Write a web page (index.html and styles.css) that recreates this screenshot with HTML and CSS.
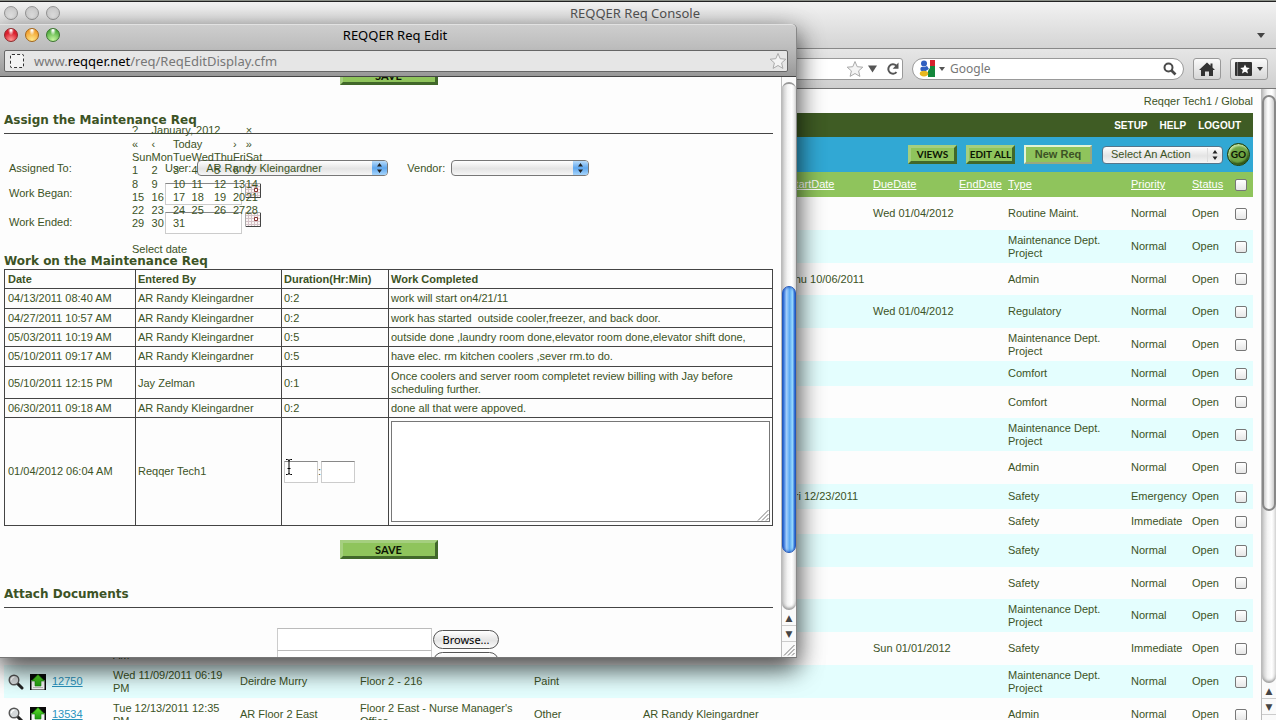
FILE: index.html
```html
<!DOCTYPE html>
<html lang="en">
<head>
<meta charset="utf-8">
<title>REQQER Req Console</title>
<link rel="stylesheet" href="styles.css">
</head>
<body>
<svg class="defs" aria-hidden="true">
  <defs>
    <linearGradient id="leaf" x1="0" y1="0" x2="0" y2="1"><stop offset="0" stop-color="#5fe02a"/><stop offset="1" stop-color="#1f9a10"/></linearGradient>
    <symbol id="lens" viewBox="0 0 16 16"><path d="M9.5 9.5 14 14" stroke="#222" stroke-width="3" stroke-linecap="round"/><circle cx="6" cy="6" r="4.8" fill="#d4d8da" stroke="#555" stroke-width="1.4"/><path d="M3.4 6.2A2.8 2.8 0 0 1 6.4 3.2" fill="none" stroke="#fff" stroke-width="1.2"/></symbol>
    <symbol id="upload" viewBox="0 0 16 16"><path d="M0 0h16v16H0z" fill="#0a0a0a"/><path d="M1.500 6h13v9.500h-13z" fill="#f4f4f4"/><path d="M3 13.500h10" stroke="#bbb"/><path d="M8 .5 14.500 7H11v5H5V7H1.500z" fill="url(#leaf)" stroke="#158009" stroke-width=".6"/></symbol>
    <symbol id="star" viewBox="0 0 18 18"><path d="M9 1.500 11.200 6.700 16.800 7.200 12.600 10.900 13.900 16.400 9 13.500 4.100 16.400 5.400 10.900 1.200 7.200 6.800 6.700z" stroke-linejoin="round"/></symbol>
    <symbol id="updown" viewBox="0 0 8 12"><path d="M4 1 6.500 4.500h-5zM4 11 1.500 7.500h5z"/></symbol>
    <symbol id="cal" viewBox="0 0 16 15"><path d="M.5.500h15v14H.500z" fill="#fbf4f4" stroke="#aaa"/><path d="M3.500 1v13M6.500 1v13M9.500 1v13M12.500 1v13M1 3.500h14M1 6.500h14M1 9.500h14M1 12.500h14" stroke="#d5c3c8"/><path d="M15.500 1v13.500H1" fill="none" stroke="#444"/><path d="M9.500 5.500h3v3h-3z" fill="#fff" stroke="#833"/></symbol>
    <symbol id="grip" viewBox="0 0 12 12"><path d="M1 11.500 11.500 1M5 11.500 11.500 5M9 11.500 11.500 9" stroke="#777" fill="none"/></symbol>
  </defs>
</svg>

<div class="console">
  <header class="titlebar">
    <div class="lights off"><i></i><i></i><i></i></div>
    <h1>REQQER Req Console</h1>
    <svg class="tabs-menu" viewBox="0 0 8 5"><path d="M0 0h8L4 5z"/></svg>
  </header>
  <div class="toolbar">
    <div class="location">
      <svg class="fav" width="18" height="18"><use href="#star"/></svg>
      <svg width="9" height="8" viewBox="0 0 9 8"><path d="M0 .5h9L4.500 7.500z" fill="#555"/></svg>
      <svg class="reload" width="14" height="14" viewBox="0 0 14 14"><path d="M10.500 10.200A4.700 4.700 0 1 1 10.200 3.600" fill="none" stroke="#555" stroke-width="2"/><path d="M12.500.500v6.200H6.700z" fill="#555"/></svg>
    </div>
    <div class="search">
      <svg width="17" height="17" viewBox="0 0 17 17"><path d="M9 0h7v6h-5z" fill="#d5232e"/><path d="M9 6h7v11H9z" fill="#14873b"/><path d="M9 0h2v8l-2 3z" fill="#fff"/><circle cx="5" cy="3.500" r="3" fill="#2f5fc0"/><circle cx="3.500" cy="9" r="2.200" fill="#2f5fc0"/><path d="M3 8 8 6l2 3-5 3z" fill="#2f5fc0"/><ellipse cx="5" cy="13.600" rx="4.200" ry="2.800" fill="#e8b81f"/></svg>
      <svg width="6" height="4" viewBox="0 0 6 4"><path d="M0 0h6L3 4z" fill="#555"/></svg>
      <input type="text" placeholder="Google" aria-label="Search with Google">
      <svg width="14" height="14" viewBox="0 0 14 14"><circle cx="5.500" cy="5.500" r="4" fill="none" stroke="#4a4a4a" stroke-width="2"/><path d="m8.500 8.500 4 4" stroke="#4a4a4a" stroke-width="2.600"/></svg>
    </div>
    <button class="tool" aria-label="Home"><svg width="16" height="14" viewBox="0 0 16 14"><path d="M8 .5 11.500 3.700V1.500h2v4L16 8h-2v6h-4V9.500H6V14H2V8H0z" fill="#333"/></svg></button>
    <button class="tool wide" aria-label="Bookmarks"><svg width="17" height="14" viewBox="0 0 17 14"><rect width="17" height="14" rx="1" fill="#333"/><path d="M2.500 0v14" stroke="#777"/><path d="m10 2.500 1.400 3.100 3.400.3-2.600 2.200.8 3.400-3-1.800-3 1.800.8-3.400-2.600-2.200 3.400-.3z" fill="#fff"/></svg><svg width="6" height="4" viewBox="0 0 6 4"><path d="M0 0h6L3 4z" fill="#333"/></svg></button>
  </div>

  <div class="viewport">
    <main class="page">
      <p class="account">Reqqer Tech1 / Global</p>
      <nav class="menu"><a href="#">SETUP</a><a href="#">HELP</a><a href="#">LOGOUT</a></nav>
      <div class="actions">
        <button class="bevel small">VIEWS</button>
        <button class="bevel small">EDIT ALL</button>
        <button class="newreq">New Req</button>
        <span class="pick action"><select aria-label="Action"><option>Select An Action</option></select><svg class="ud"><use href="#updown"/></svg></span>
        <button class="go">GO</button>
      </div>
      <table class="reqs">
        <colgroup><col class="w48"><col class="w61"><col class="w127"><col class="w120"><col class="w174"><col class="w109"><col class="w145"><col class="w85"><col class="w86"><col class="w49"><col class="w123"><col class="w61"><col class="w40"><col></colgroup>
        <thead><tr><th></th><th></th><th></th><th></th><th></th><th></th><th></th><th><a href="#">StartDate</a></th><th><a href="#">DueDate</a></th><th><a href="#">EndDate</a></th><th><a href="#">Type</a></th><th><a href="#">Priority</a></th><th><a href="#">Status</a></th><th><input type="checkbox" aria-label="Select all"></th></tr></thead>
        <tbody>
          <tr><td colspan="7"></td><td></td><td>Wed 01/04/2012</td><td></td><td>Routine Maint.</td><td>Normal</td><td>Open</td><td><input type="checkbox" aria-label="Select req"></td></tr>
          <tr><td colspan="7"></td><td></td><td></td><td></td><td>Maintenance Dept. Project</td><td>Normal</td><td>Open</td><td><input type="checkbox" aria-label="Select req"></td></tr>
          <tr class="mid"><td colspan="7"></td><td>Thu 10/06/2011</td><td></td><td></td><td>Admin</td><td>Normal</td><td>Open</td><td><input type="checkbox" aria-label="Select req"></td></tr>
          <tr><td colspan="7"></td><td></td><td>Wed 01/04/2012</td><td></td><td>Regulatory</td><td>Normal</td><td>Open</td><td><input type="checkbox" aria-label="Select req"></td></tr>
          <tr><td colspan="7"></td><td></td><td></td><td></td><td>Maintenance Dept. Project</td><td>Normal</td><td>Open</td><td><input type="checkbox" aria-label="Select req"></td></tr>
          <tr class="short"><td colspan="7"></td><td></td><td></td><td></td><td>Comfort</td><td>Normal</td><td>Open</td><td><input type="checkbox" aria-label="Select req"></td></tr>
          <tr class="mid"><td colspan="7"></td><td></td><td></td><td></td><td>Comfort</td><td>Normal</td><td>Open</td><td><input type="checkbox" aria-label="Select req"></td></tr>
          <tr><td colspan="7"></td><td></td><td></td><td></td><td>Maintenance Dept. Project</td><td>Normal</td><td>Open</td><td><input type="checkbox" aria-label="Select req"></td></tr>
          <tr><td colspan="7"></td><td></td><td></td><td></td><td>Admin</td><td>Normal</td><td>Open</td><td><input type="checkbox" aria-label="Select req"></td></tr>
          <tr class="short"><td colspan="7"></td><td>Fri 12/23/2011</td><td></td><td></td><td>Safety</td><td>Emergency</td><td>Open</td><td><input type="checkbox" aria-label="Select req"></td></tr>
          <tr class="short"><td colspan="7"></td><td></td><td></td><td></td><td>Safety</td><td>Immediate</td><td>Open</td><td><input type="checkbox" aria-label="Select req"></td></tr>
          <tr><td colspan="7"></td><td></td><td></td><td></td><td>Safety</td><td>Normal</td><td>Open</td><td><input type="checkbox" aria-label="Select req"></td></tr>
          <tr class="mid"><td colspan="7"></td><td></td><td></td><td></td><td>Safety</td><td>Normal</td><td>Open</td><td><input type="checkbox" aria-label="Select req"></td></tr>
          <tr><td colspan="7"></td><td></td><td></td><td></td><td>Maintenance Dept. Project</td><td>Normal</td><td>Open</td><td><input type="checkbox" aria-label="Select req"></td></tr>
          <tr><td></td><td></td><td><br>AM</td><td></td><td></td><td></td><td></td><td></td><td>Sun 01/01/2012</td><td></td><td>Safety</td><td>Immediate</td><td>Open</td><td><input type="checkbox" aria-label="Select req"></td></tr>
          <tr><td><span class="icons"><svg><use href="#lens"/></svg><svg><use href="#upload"/></svg></span></td><td><a href="#">12750</a></td><td>Wed 11/09/2011 06:19 PM</td><td>Deirdre Murry</td><td>Floor 2 - 216</td><td>Paint</td><td></td><td></td><td></td><td></td><td>Maintenance Dept. Project</td><td>Normal</td><td>Open</td><td><input type="checkbox" aria-label="Select 12750"></td></tr>
          <tr><td><span class="icons"><svg><use href="#lens"/></svg><svg><use href="#upload"/></svg></span></td><td><a href="#">13534</a></td><td>Tue 12/13/2011 12:35 PM</td><td>AR Floor 2 East</td><td>Floor 2 East - Nurse Manager's Office</td><td>Other</td><td>AR Randy Kleingardner</td><td></td><td></td><td></td><td>Admin</td><td>Normal</td><td>Open</td><td><input type="checkbox" aria-label="Select 13534"></td></tr>
        </tbody>
      </table>
    </main>
    <div class="scroll grey"><div class="track"><div class="thumb"></div></div><span class="step">▲</span><span class="step">▼</span><span class="corner"></span></div>
  </div>
</div>

<section class="popup">
  <header class="titlebar">
    <div class="lights"><i></i><i></i><i></i></div>
    <h1>REQQER Req Edit</h1>
  </header>
  <div class="urlbar"><div class="url"><span class="site"></span><span class="addr">www.<b>reqqer.net</b>/req/ReqEditDisplay.cfm</span><svg class="fav" width="18" height="18"><use href="#star"/></svg></div></div>
  <div class="viewport">
    <form class="edit">
      <button type="button" class="bevel save first">SAVE</button>
      <h2>Assign the Maintenance Req</h2>
      <div class="fields">
        <div class="row"><span class="name">Assigned To:</span>
          <label for="user">User:</label><span class="pick blue user"><select id="user"><option>AR Randy Kleingardner</option></select><svg class="ud"><use href="#updown"/></svg></span>
          <label for="vendor" class="vendor-label">Vendor:</label><span class="pick blue vendor"><select id="vendor"><option></option></select><svg class="ud"><use href="#updown"/></svg></span></div>
        <div class="row date"><label class="name" for="began">Work Began:</label><input id="began" type="text"><svg width="16" height="15"><use href="#cal"/></svg></div>
        <div class="row date"><label class="name" for="ended">Work Ended:</label><input id="ended" type="text"><svg width="16" height="15"><use href="#cal"/></svg></div>
        <table class="calendar">
          <thead>
            <tr><td>?</td><td colspan="5">January, 2012</td><td>×</td></tr>
            <tr><td>«</td><td>‹</td><td colspan="3">Today</td><td>›</td><td>»</td></tr>
            <tr><td>Sun</td><td>Mon</td><td>Tue</td><td>Wed</td><td>Thu</td><td>Fri</td><td>Sat</td></tr>
          </thead>
          <tbody>
            <tr><td>1</td><td>2</td><td>3</td><td>4</td><td>5</td><td>6</td><td>7</td></tr>
            <tr><td>8</td><td>9</td><td>10</td><td>11</td><td>12</td><td>13</td><td>14</td></tr>
            <tr><td>15</td><td>16</td><td>17</td><td>18</td><td>19</td><td>20</td><td>21</td></tr>
            <tr><td>22</td><td>23</td><td>24</td><td>25</td><td>26</td><td>27</td><td>28</td></tr>
            <tr><td>29</td><td>30</td><td>31</td><td></td><td></td><td></td><td></td></tr>
          </tbody>
          <tfoot><tr><td colspan="7">Select date</td></tr></tfoot>
        </table>
      </div>
      <h2 class="tight">Work on the Maintenance Req</h2>
      <table class="work">
        <colgroup><col class="w131"><col class="w146"><col class="w107"><col></colgroup>
        <thead><tr><th>Date</th><th>Entered By</th><th>Duration(Hr:Min)</th><th>Work Completed</th></tr></thead>
        <tbody>
          <tr><td>04/13/2011 08:40 AM</td><td>AR Randy Kleingardner</td><td>0:2</td><td>work will start on4/21/11</td></tr>
          <tr><td>04/27/2011 10:57 AM</td><td>AR Randy Kleingardner</td><td>0:2</td><td>work has started&nbsp; outside cooler,freezer, and back door.</td></tr>
          <tr><td>05/03/2011 10:19 AM</td><td>AR Randy Kleingardner</td><td>0:5</td><td>outside done ,laundry room done,elevator room done,elevator shift done,</td></tr>
          <tr><td>05/10/2011 09:17 AM</td><td>AR Randy Kleingardner</td><td>0:5</td><td>have elec. rm kitchen coolers ,sever rm.to do.</td></tr>
          <tr><td>05/10/2011 12:15 PM</td><td>Jay Zelman</td><td>0:1</td><td>Once coolers and server room completet review billing with Jay before scheduling further.</td></tr>
          <tr><td>06/30/2011 09:18 AM</td><td>AR Randy Kleingardner</td><td>0:2</td><td>done all that were appoved.</td></tr>
          <tr class="entry"><td>01/04/2012 06:04 AM</td><td>Reqqer Tech1</td><td><span class="duration"><input type="text" aria-label="Hours">:<input type="text" aria-label="Minutes"><svg class="ibeam" width="8" height="16" viewBox="0 0 8 16"><path d="M1 .5h1.500Q4 .5 4 2Q4 .5 5.500.500H7M4 2v12M1 15.500h1.500Q4 15.500 4 14Q4 15.500 5.500 15.500H7M2.500 9.500h3" fill="none" stroke="#000"/></svg></span></td><td><span class="note"><textarea aria-label="Work completed"></textarea><svg class="grip"><use href="#grip"/></svg></span></td></tr>
        </tbody>
      </table>
      <button type="button" class="bevel save">SAVE</button>
      <h2>Attach Documents</h2>
      <div class="files">
        <div><input type="text" aria-label="Document 1"><button type="button">Browse...</button></div>
        <div><input type="text" aria-label="Document 2"><button type="button">Browse...</button></div>
      </div>
    </form>
    <div class="scroll aqua"><div class="track"><div class="thumb"></div></div><span class="step">▲</span><span class="step">▼</span><span class="corner"><svg class="grip"><use href="#grip"/></svg></span></div>
  </div>
</section>
</body>
</html>
```

FILE: styles.css
```css
* { box-sizing: border-box; }
html, body { height: 100%; }
body {
  margin: 0;
  overflow: hidden;
  background: #8b8f88;
  color: #3c5325;
  font: 11px/13px "Liberation Sans", Arial, sans-serif;
}
.defs { position: absolute; width: 0; height: 0; }
svg { display: block; flex: none; }
button, input, select, textarea { font: inherit; color: inherit; margin: 0; border-radius: 0; }
h1, h2, p { margin: 0; }
table { border-spacing: 0; }
td, th { padding: 0; text-align: left; }

/* window chrome */
.console {
  display: flex;
  flex-direction: column;
  height: 100%;
  padding-top: 1px;
}
.console > .titlebar {
  position: relative;
  height: 48px;
  border-top: 1px solid #222;
  border-bottom: 1px solid #888;
  background: linear-gradient(#f2f2f2, #d4d4d4);
}
.titlebar h1 {
  text-align: center;
  color: #555;
  font: 13px/22px "Noto Sans", sans-serif;
}
.console .titlebar h1, .popup .titlebar h1 { padding-right: 6px; }
.lights { position: absolute; left: 4px; top: 4px; display: flex; gap: 7px; }
.lights i {
  width: 14px;
  height: 14px;
  border-radius: 50%;
  border: 1px solid #8d2a2c;
  background: radial-gradient(ellipse at 50% 8%, #fff 0 6%, transparent 35%), radial-gradient(circle at 50% 90%, #ff9a96, #d9202e 60%);
}
.lights i:nth-child(2) { border-color: #a3661b; background: radial-gradient(ellipse at 50% 8%, #fff 0 6%, transparent 35%), radial-gradient(circle at 50% 90%, #ffe88a, #f09a28 80%); }
.lights i:nth-child(3) { border-color: #3c7430; background: radial-gradient(ellipse at 50% 8%, #fff 0 6%, transparent 35%), radial-gradient(circle at 50% 90%, #c7f7a0, #4aa83a 80%); }
.lights.off i { border-color: #999; background: radial-gradient(circle at 50% 80%, #eee, #ccc 80%); }
.popup .lights { top: 3px; }
.tabs-menu { position: absolute; right: 11px; bottom: 10px; width: 8px; height: 5px; fill: #444; }
.toolbar {
  display: flex;
  flex: none;
  align-items: center;
  gap: 9px;
  height: 40px;
  padding-right: 8px;
  border-bottom: 1px solid #777;
  background: linear-gradient(#e6e6e6, #cfcfcf);
}
.location {
  display: flex;
  flex: 1;
  align-items: center;
  justify-content: flex-end;
  gap: 4px;
  height: 22px;
  padding-right: 2px;
  border: 1px solid #999;
  border-radius: 3px;
  background: #fff;
}
.location .reload { margin-left: 5px; }
.fav { fill: #f4f4f4; stroke: #aaa; }
.search {
  display: flex;
  align-items: center;
  gap: 3px;
  width: 272px;
  height: 22px;
  padding: 0 6px;
  border: 1px solid #999;
  border-radius: 11px;
  background: #fff;
}
.search input {
  flex: 1;
  min-width: 0;
  padding: 0 2px;
  border: 0;
  outline: 0;
  background: none;
  font: 12px/18px "Noto Sans", sans-serif;
}
.search input::placeholder { color: #777; opacity: 1; }
.tool {
  display: flex;
  align-items: center;
  justify-content: center;
  gap: 5px;
  width: 28px;
  height: 22px;
  padding: 0;
  border: 1px solid #999;
  border-radius: 3px;
  background: linear-gradient(#fafafa, #d6d6d6);
}
.tool.wide { width: 38px; }
.viewport { display: flex; flex: 1; min-height: 0; overflow: hidden; background: #fdfdfd; }

/* console page */
.page { flex: 1; min-width: 0; padding: 0 8px 0 4px; }
.account { padding: 6px 0 5px; text-align: right; }
.menu {
  display: flex;
  justify-content: flex-end;
  gap: 12px;
  padding: 6px 12px 5px;
  background: #3f5c24;
}
.menu a { color: #fff; font-size: 10px; font-weight: bold; text-decoration: none; }
.actions {
  display: flex;
  justify-content: flex-end;
  align-items: center;
  height: 35px;
  padding-right: 3px;
  background: #31a8d4;
}
.bevel {
  border: 3px solid;
  border-color: #a5cf7f #41682a #41682a #a5cf7f;
  background: #8fc45c;
  padding: 0;
  color: #0c1503;
  font: bold 11px/13px Lato, sans-serif;
}
.bevel.small { width: 49px; height: 19px; margin-right: 9px; font-size: 10px; white-space: nowrap; }
.newreq {
  width: 68px;
  height: 19px;
  margin-right: 10px;
  padding: 0;
  border: 2px solid;
  border-color: #e4f3d6 #98a880 #98a880 #e4f3d6;
  background: #8fc45c;
  font-weight: bold;
}
.pick {
  display: flex;
  align-items: center;
  height: 16px;
  overflow: hidden;
  border: 1px solid #777;
  border-radius: 4px;
  background: linear-gradient(#fff, #e4e4e4 55%, #f6f6f6);
}
.pick select {
  flex: 1;
  min-width: 0;
  height: 100%;
  padding: 0 0 0 8px;
  border: 0;
  outline: 0;
  appearance: none;
  background: none;
}
.ud { width: 15px; height: 14px; padding: 1px 3px; fill: #222; }
.pick.action { width: 121px; height: 18px; margin-right: 4px; border-color: #56758a; }
.pick.action .ud { border-left: 1px solid #ddd; }
.pick.blue .ud { background: linear-gradient(#b9dcfa, #5fa7ee 50%, #a5d4fb); }
.go {
  width: 23px;
  height: 23px;
  padding: 0;
  border: 1px solid #1c3a0c;
  border-radius: 50%;
  background: #6fa544;
  box-shadow: inset 1px 2px 2px #c3e3a4, inset -1px -2px 2px #2c5216;
  color: #0c1503;
  font: bold 10px/19px Lato, sans-serif;
}
.reqs { width: 100%; table-layout: fixed; }
.reqs th { height: 25px; background: #8fc45c; font-weight: normal; white-space: nowrap; }
.reqs th a { color: #fff; }
.reqs td { height: 33px; padding-right: 4px; }
.reqs td:nth-child(n+2):nth-last-child(n+6) { padding-right: 6px; }
.reqs td:nth-last-child(-n+7):nth-last-child(n+6) { white-space: nowrap; }
.reqs .mid td { height: 32px; }
.reqs .short td { height: 25px; }
.reqs tbody tr:nth-child(even) { background: #e4fefe; }
.reqs td a { color: #2b94bd; }
.reqs input {
  display: block;
  width: 12px;
  height: 12px;
  margin-left: 3px;
  appearance: none;
  border: 1px solid #777;
  border-radius: 2px;
  background: linear-gradient(#fff, #e6e6e6);
}
.icons { display: flex; gap: 6px; padding-left: 4px; }
.icons svg { width: 16px; height: 16px; }
.w40 { width: 40px; }
.w48 { width: 48px; }
.w49 { width: 49px; }
.w61 { width: 61px; }
.w85 { width: 85px; }
.w86 { width: 86px; }
.w107 { width: 107px; }
.w109 { width: 109px; }
.w120 { width: 120px; }
.w123 { width: 123px; }
.w127 { width: 127px; }
.w131 { width: 131px; }
.w145 { width: 145px; }
.w146 { width: 146px; }
.w174 { width: 174px; }

/* scroll bars */
.scroll { display: flex; flex-direction: column; flex: none; width: 15px; border-left: 1px solid #bbb; background: #fafafa; }
.track {
  display: flex;
  flex-direction: column;
  flex: 1;
  border-radius: 0 0 7px 7px;
  background: linear-gradient(90deg, #c4c4c4, #f4f4f4 40%, #fff 70%, #ddd);
  box-shadow: inset 0 -3px 3px -1px #999;
}
.thumb { border-radius: 7px; }
.grey .thumb { height: 416px; margin-top: 6px; border: 2px solid #888; background: linear-gradient(90deg, #ccc, #fff 40%, #eee 70%, #ccc); }
.aqua .track { margin-top: 5px; border-radius: 7px; border-top: 2px solid #999; }
.aqua .thumb { height: 267px; margin: 202px 0 0; border: 1px solid #2458b8; background: linear-gradient(90deg, #2c6fdc, #a3cffb 30%, #5aa9f4 55%, #9bdcff 80%, #2c6fdc); box-shadow: inset 0 0 3px #1b4fc0; }
.step {
  height: 16px;
  border-bottom: 1px solid #ccc;
  color: #444;
  text-align: center;
  font: 9px/16px "DejaVu Sans", sans-serif;
}
.corner { display: flex; justify-content: flex-end; align-items: flex-end; height: 15px; padding: 0 1px 1px 0; }
.grey .corner { height: 5px; }
.grip { width: 12px; height: 12px; }

/* edit window, floating over the console */
.popup {
  position: absolute;
  left: 0;
  top: 24px;
  display: flex;
  flex-direction: column;
  width: 797px;
  height: 634px;
  border-right: 1px solid #888;
  border-bottom: 1px solid #777;
  border-radius: 0 5px 0 0;
  background: #b8b8b8;
  box-shadow: 0 12px 24px rgba(0, 0, 0, .5), 0 6px 28px rgba(0, 0, 0, .4);
}
.popup > .titlebar { position: relative; flex: none; height: 23px; border-top: 1px solid #e2e2e2; border-radius: 0 5px 0 0; background: linear-gradient(#cecece, #bdbdbd); }
.popup > .titlebar h1 { color: #000; line-height: 21px; }
.urlbar { flex: none; height: 30px; padding: 3px 8px 5px 4px; border-bottom: 1px solid #444; background: linear-gradient(#bdbdbd, #989898); }
.url { display: flex; align-items: center; height: 22px; border: 1px solid #666; border-radius: 2px; background: #e6e6e6; }
.site { width: 14px; height: 14px; margin: 0 10px 0 5px; border: 1px dashed #333; border-radius: 2px; background: #f4f4f4; }
.addr { flex: 1; color: #777; font: 13px/20px "Noto Sans", sans-serif; }
.addr b { color: #000; font-weight: normal; }
.edit { flex: 1; min-width: 0; padding: 0 8px 0 4px; }
.bevel.save { display: block; width: 98px; height: 19px; margin: 14px auto 27px; }
.bevel.save.first { margin: -11px auto 27px; }
h2 { padding-bottom: 5px; border-bottom: 1px solid #444; font: bold 12px/16px "DejaVu Sans", Verdana, sans-serif; }
h2.tight { padding-bottom: 0; border: 0; }
.fields { position: relative; padding: 24px 0 17px 5px; }
.row { display: flex; align-items: center; height: 20px; }
.row .name { width: 156px; }
.row.date { height: 28px; align-items: flex-start; margin-top: 1px; }
.row.date .name { line-height: 28px; }
.row.date input, .duration input, .files input { border: 1px solid #ccc; border-top-color: #888; background: #fff; padding: 2px; }
.row.date input { width: 77px; height: 22px; margin: 4px 3px 0 0; }
.row.date svg { margin-top: 4px; }
.user { width: 191px; margin-left: 6px; }
.vendor-label { margin-left: 19px; }
.vendor { width: 138px; margin-left: 6px; }
.calendar { position: absolute; left: 128px; top: -10px; }
.calendar td { height: 13px; white-space: nowrap; }
.calendar tr:first-child td { padding-bottom: 1px; }
.calendar tfoot td { padding-top: 13px; }
.work { width: 100%; table-layout: fixed; border-collapse: collapse; }
.work th, .work td { padding: 3px 2px 2px; border: 1px solid #444; }
.work th:first-child, .work td:first-child { padding-left: 3px; }
.work tbody tr:nth-child(3n+1) td { padding-bottom: 3px; }
.duration { position: relative; display: flex; align-items: center; }
.duration input { width: 34px; height: 22px; }
.ibeam { position: absolute; left: 1px; top: -2px; }
.note { position: relative; display: block; }
.note textarea { display: block; width: 100%; height: 101px; border: 1px solid #777; background: #fff; resize: none; }
.note .grip { position: absolute; right: 1px; bottom: 1px; }
.files { padding: 20px 0 0 273px; }
.files div { display: flex; align-items: center; height: 22px; }
.files input { width: 155px; height: 23px; border-top-color: #bbb; }
.files button {
  width: 66px;
  height: 19px;
  margin-left: 1px;
  padding: 0;
  border: 1px solid #555;
  border-radius: 10px;
  background: linear-gradient(#fff, #e4e4e4 55%, #fafafa);
  color: #000;
  font: 11px/15px "Noto Sans", sans-serif;
}
```
